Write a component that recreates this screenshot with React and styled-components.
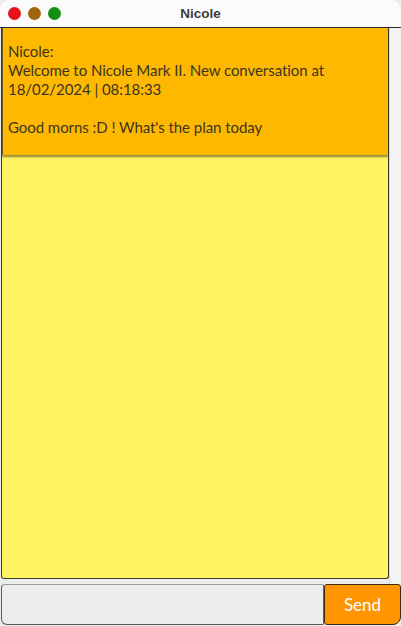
import styled, { createGlobalStyle } from "styled-components";

const GlobalStyle = createGlobalStyle`
  html, body {
    margin: 0;
    padding: 0;
    background: #ececec;
  }
  * { box-sizing: border-box; }
`;

const Window = styled.div`
  width: 401px;
  height: 626px;
  display: flex;
  flex-direction: column;
  background: #ececec;
  font-family: Lato, "Noto Sans", sans-serif;
  overflow: hidden;
`;

const TitleBar = styled.div`
  height: 28px;
  flex-shrink: 0;
  position: relative;
  display: flex;
  align-items: center;
  justify-content: center;
  background: #fbfbfb;
  border-bottom: 1px solid #2b2b2b;
  border-radius: 10px 10px 0 0;
`;

const Lights = styled.div`
  position: absolute;
  left: 8px;
  top: 7px;
  display: flex;
  gap: 7px;
`;

const Light = styled.span`
  width: 13px;
  height: 13px;
  border-radius: 50%;
  background: ${(p) => p.color};
`;

const Title = styled.div`
  font-family: "Liberation Sans", Arial, sans-serif;
  font-weight: 700;
  font-size: 13.5px;
  color: #3c3c3c;
`;

const Body = styled.div`
  flex: 1;
  display: flex;
  min-height: 0;
`;

const Chat = styled.div`
  flex: 1;
  margin: 0 0 5px 1px;
  background: #fff563;
  border: 1px solid #3a3a2a;
  border-top: none;
  border-radius: 0 0 3px 3px;
  overflow: hidden;
`;

const Scroll = styled.div`
  width: 12px;
  flex-shrink: 0;
  background: #f3f3f3;
  border-left: 1px solid #d8d8d8;
`;

const Message = styled.div`
  background: #ffb800;
  border-left: 1px solid #6a5a20;
  padding: 14px 5px 16px;
  height: 127px;
  box-shadow: 0 2px 2px rgba(60, 50, 20, 0.55);
  color: #3b3520;
  font-size: 15px;
  line-height: 19px;
  white-space: pre-wrap;
  letter-spacing: -0.05px;
`;

const InputRow = styled.div`
  height: 42px;
  flex-shrink: 0;
  display: flex;
  padding: 0 0 1px 1px;
`;

const Field = styled.input`
  flex: 1;
  border: 1px solid #5a5a5a;
  border-top-color: #9a9a9a;
  border-radius: 4px 2px 2px 6px;
  background: #ededed;
  outline: none;
`;

const SendButton = styled.button`
  width: 77px;
  border: 1px solid #3a2a10;
  border-radius: 3px 3px 8px 3px;
  background: #ff9500;
  color: #fff;
  font-family: Lato, "Noto Sans", sans-serif;
  font-size: 17px;
  padding: 0;
`;

export default function App() {
  return (
    <>
      <GlobalStyle />
      <Window>
        <TitleBar>
          <Lights>
            <Light color="#e8131a" />
            <Light color="#a1640d" />
            <Light color="#139014" />
          </Lights>
          <Title>Nicole</Title>
        </TitleBar>
        <Body>
          <Chat>
            <Message>
              {"Nicole:\nWelcome to Nicole Mark II. New conversation at\n18/02/2024 | 08:18:33\n\nGood morns :D ! What's the plan today"}
            </Message>
          </Chat>
          <Scroll />
        </Body>
        <InputRow>
          <Field />
          <SendButton>Send</SendButton>
        </InputRow>
      </Window>
    </>
  );
}
